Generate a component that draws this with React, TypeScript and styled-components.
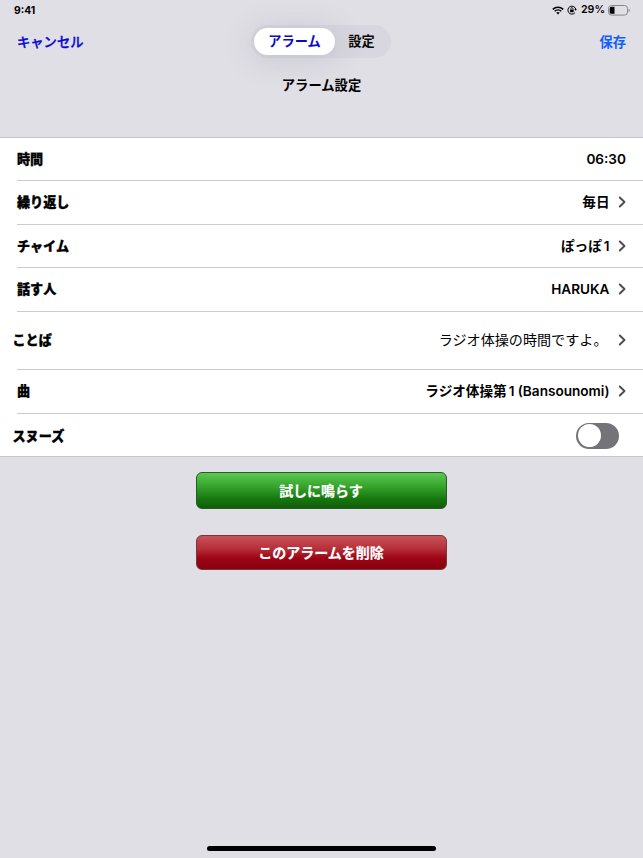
import React from "react";
import styled, { createGlobalStyle } from "styled-components";

const GlobalStyle = createGlobalStyle`
  * { box-sizing: border-box; }
  body {
    margin: 0;
    background: #e0dfe6;
    font-family: Inter, "Noto Sans CJK JP", sans-serif;
    color: #000;
  }
  button { font-family: inherit; border: 0; background: none; padding: 0; white-space: nowrap; }
`;

const Screen = styled.div`
  width: 643px;
  height: 858px;
  display: flex;
  flex-direction: column;
  background: #e0dfe6;
  overflow: hidden;
`;

const StatusBar = styled.div`
  height: 21px;
  flex: none;
  display: flex;
  align-items: center;
  justify-content: space-between;
  padding: 0 13px 1px 14px;
  font-size: 10.3px;
  line-height: 20px;
  font-weight: 700;
`;

const StatusIcons = styled.div`
  display: flex;
  align-items: center;
  svg { display: block; }
`;

const Percent = styled.span`
  width: 24px;
  margin: 0 3px 0 4px;
  font-size: 10.6px;
  font-weight: 600;
`;

const NavBar = styled.div`
  height: 41px;
  flex: none;
  display: grid;
  grid-template-columns: 1fr 140px 1fr;
  align-items: center;
  padding: 0 18px 0 17px;
`;

const NavButton = styled.button<{ $end?: boolean }>`
  justify-self: ${(p) => (p.$end ? "end" : "start")};
  margin-right: ${(p) => (p.$end ? "-1px" : "0")};
  font-size: 13.3px;
  line-height: 20px;
  font-weight: ${(p) => (p.$end ? 700 : 500)};
  color: ${(p) => (p.$end ? "#0f5dff" : "#0b09d0")};
  -webkit-text-stroke: ${(p) => (p.$end ? "0" : "0.35px")};
`;

const Segments = styled.div`
  display: flex;
  align-items: center;
  width: 140px;
  height: 33px;
  padding: 3px;
  border-radius: 17px;
  background: #d8d7df;
`;

const Segment = styled.button<{ $active?: boolean }>`
  width: ${(p) => (p.$active ? "81px" : "53px")};
  height: 27px;
  border-radius: 14px;
  font-size: 13.2px;
  line-height: 27px;
  font-weight: 700;
  color: ${(p) => (p.$active ? "#0b09c8" : "#0a0a0a")};
  background: ${(p) => (p.$active ? "#fff" : "transparent")};
  box-shadow: ${(p) => (p.$active ? "0 3px 28px 4px rgba(100, 105, 125, 0.17)" : "none")};
`;

const Title = styled.h1`
  margin: 13px 0 0;
  height: 62px;
  flex: none;
  text-align: center;
  font-size: 13.3px;
  line-height: 20px;
  font-weight: 700;
`;

const List = styled.div`
  flex: none;
  background: #fff;
  border-top: 1px solid #c6c6ca;
  border-bottom: 1px solid #c9c9cd;
`;

const Divider = styled.div`
  height: 1px;
  margin-left: 17px;
  background: #cbcbce;
`;

const Row = styled.div<{ $height: number; $outdent?: boolean }>`
  height: ${(p) => p.$height}px;
  display: flex;
  align-items: center;
  padding: 0 17px ${(p) => (p.$height % 2 ? 1 : 0)}px ${(p) => (p.$outdent ? 12.5 : 17)}px;
`;

const Label = styled.span<{ $lowered?: boolean }>`
  flex: 1;
  padding-top: ${(p) => (p.$lowered ? 2 : 0)}px;
  font-size: 13.1px;
  line-height: 20px;
  font-weight: 900;
  -webkit-text-stroke: 0.3px;
`;

const Value = styled.span<{ $plain?: boolean }>`
  font-size: ${(p) => (p.$plain ? "14.1px" : "13.6px")};
  line-height: 20px;
  margin-right: ${(p) => (p.$plain ? "2px" : "0")};
  font-weight: ${(p) => (p.$plain ? 400 : 600)};
  white-space: nowrap;
`;

const Numeral = styled.span`
  margin-left: 2px;
`;

const ChevronIcon = styled.svg`
  display: block;
  flex: none;
  width: 8px;
  height: 12px;
  margin-left: 8.5px;
`;

const Toggle = styled.div`
  width: 43px;
  height: 26px;
  margin: 1px 7px 0 0;
  padding: 1.5px;
  border-radius: 13px;
  background: #747378;
`;

const Knob = styled.div`
  width: 23px;
  height: 23px;
  border-radius: 50%;
  background: #fff;
`;

const Actions = styled.div`
  flex: 1;
  display: flex;
  flex-direction: column;
  align-items: center;
  gap: 26px;
  padding-top: 15px;
`;

const ActionButton = styled.button<{ $tone: "green" | "red" }>`
  width: 251px;
  height: ${(p) => (p.$tone === "green" ? 37 : 35)}px;
  padding-right: 1px;
  border: 1px solid ${(p) => (p.$tone === "green" ? "#285b2a" : "#75383e")};
  border-radius: 6px;
  color: #fff;
  font-size: 14px;
  line-height: ${(p) => (p.$tone === "green" ? 35 : 33)}px;
  font-weight: 700;
  -webkit-text-stroke: 0.2px;
  background: ${(p) =>
    p.$tone === "green"
      ? "linear-gradient(#5bc951, #36a42d 38%, #16760e 75%, #115c08)"
      : "linear-gradient(#ca5158, #b6303a 38%, #9b0414 68%, #8b000e)"};
`;

const HomeIndicator = styled.div`
  flex: none;
  align-self: center;
  width: 229px;
  height: 5px;
  margin-bottom: 7px;
  border-radius: 3px;
  background: #000;
`;

const Chevron = () => (
  <ChevronIcon viewBox="0 0 8 12" fill="none" stroke="#4c4c4e" strokeWidth="1.9">
    <path d="M1.8 1.5 6.5 6 1.8 10.5" strokeLinecap="round" strokeLinejoin="round" />
  </ChevronIcon>
);

const Wifi = () => (
  <svg width="12" height="9" viewBox="0 0 12 9" fill="none" stroke="#000">
    <path d="M.8 3.3a7.5 7.5 0 0 1 10.4 0" strokeWidth="1.6" />
    <path d="M2.7 5.3a4.8 4.8 0 0 1 6.6 0" strokeWidth="1.5" />
    <path d="M4.3 6.8a2.5 2.5 0 0 1 3.4 0L6 8.5Z" fill="#000" stroke="none" />
  </svg>
);

const RotationLock = () => (
  <svg width="10" height="10" viewBox="0 0 10 10" fill="none" stroke="#000">
    <path d="M8 7.7A4 4 0 1 1 8.8 4.2" strokeWidth="1" />
    <path d="m7.3 4.1 2.5-.1-1.1 1.8Z" fill="#000" stroke="none" />
    <rect x="3.1" y="4.4" width="3.6" height="2.8" rx=".4" fill="#000" stroke="none" />
    <path d="M3.8 4.5v-.8a1.1 1.1 0 0 1 2.2 0v.8" strokeWidth=".8" />
  </svg>
);

const Battery = () => (
  <svg width="22" height="11" viewBox="0 0 22 11">
    <rect x=".5" y=".5" width="19" height="9.6" rx="3" fill="none" stroke="#88878d" />
    <path d="M3.3 1.8H6.5v7H3.3A1.6 1.6 0 0 1 1.7 7.2V3.4a1.6 1.6 0 0 1 1.6-1.6Z" fill="#000" />
    <path d="M20.6 3.8q1.2.4 1.2 1.6t-1.2 1.6Z" fill="#88878d" />
  </svg>
);

type Item = {
  label: string;
  height: number;
  value?: React.ReactNode;
  arrow?: boolean;
  outdent?: boolean;
  plain?: boolean;
  toggle?: boolean;
};

const items: Item[] = [
  { label: "時間", value: "06:30", height: 42 },
  { label: "繰り返し", value: "毎日", height: 43, arrow: true },
  { label: "チャイム", value: <>ぽっぽ<Numeral>1</Numeral></>, height: 42, arrow: true },
  { label: "話す人", value: "HARUKA", height: 43, arrow: true },
  { label: "ことば", value: "ラジオ体操の時間ですよ。", height: 57, arrow: true, outdent: true, plain: true },
  { label: "曲", value: <>ラジオ体操第<Numeral>1</Numeral> (Bansounomi)</>, height: 43, arrow: true },
  { label: "スヌーズ", height: 42, outdent: true, toggle: true },
];

export default function App() {
  return (
    <Screen>
      <GlobalStyle />
      <StatusBar>
        <span>9:41</span>
        <StatusIcons>
          <Wifi />
          <svg width="3" height="1" />
          <RotationLock />
          <Percent>29%</Percent>
          <Battery />
        </StatusIcons>
      </StatusBar>
      <NavBar>
        <NavButton>キャンセル</NavButton>
        <Segments>
          <Segment $active>アラーム</Segment>
          <Segment>設定</Segment>
        </Segments>
        <NavButton $end>保存</NavButton>
      </NavBar>
      <Title>アラーム設定</Title>
      <List>
        {items.map((item, i) => (
          <React.Fragment key={item.label}>
            {i > 0 && <Divider />}
            <Row $height={item.height} $outdent={item.outdent}>
              <Label $lowered={item.toggle}>{item.label}</Label>
              {item.value && <Value $plain={item.plain}>{item.value}</Value>}
              {item.arrow && <Chevron />}
              {item.toggle && (
                <Toggle>
                  <Knob />
                </Toggle>
              )}
            </Row>
          </React.Fragment>
        ))}
      </List>
      <Actions>
        <ActionButton $tone="green">試しに鳴らす</ActionButton>
        <ActionButton $tone="red">このアラームを削除</ActionButton>
      </Actions>
      <HomeIndicator />
    </Screen>
  );
}
